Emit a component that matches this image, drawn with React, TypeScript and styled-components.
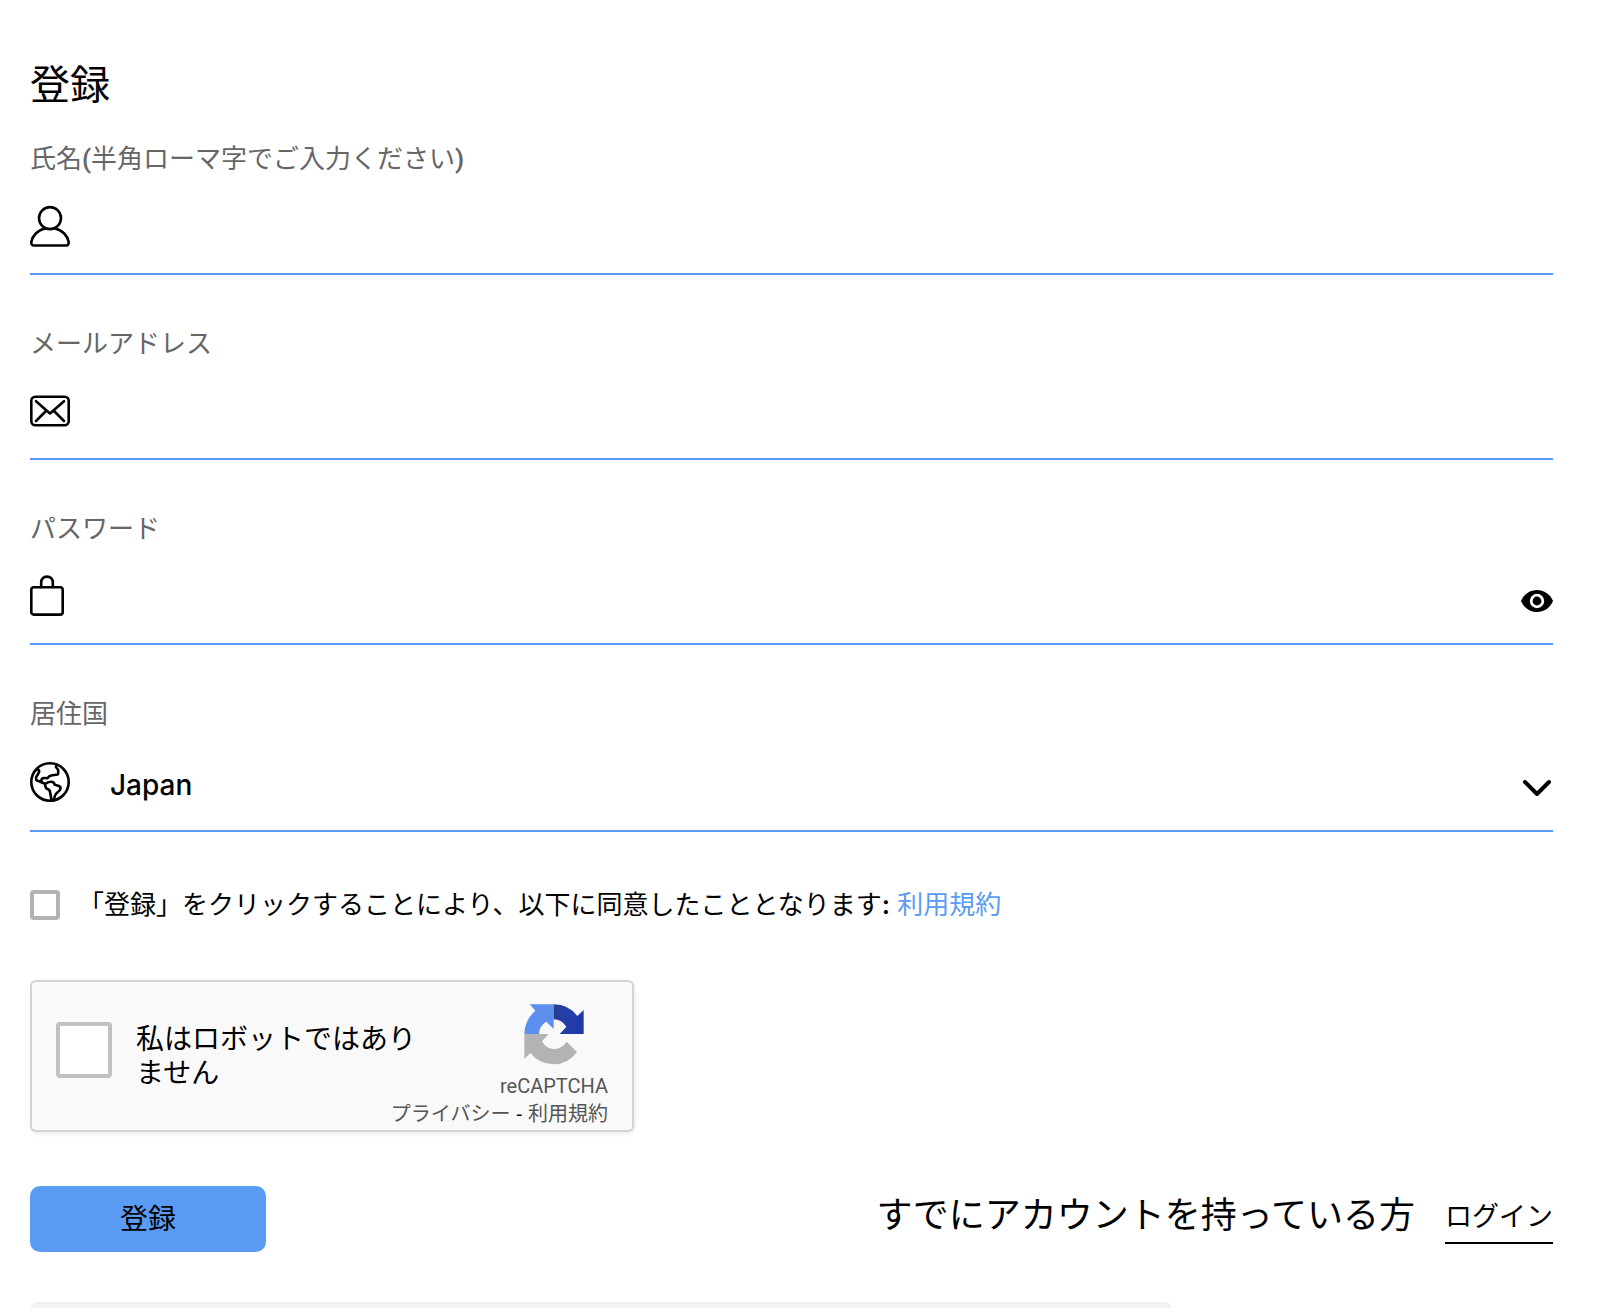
import React, { useState } from "react";
import styled, { createGlobalStyle } from "styled-components";

const blue = "#5a9bf3";
const jp = `"Noto Sans CJK JP", sans-serif`;

const GlobalStyle = createGlobalStyle`
  *, *::before, *::after { box-sizing: border-box; }
  body {
    margin: 0;
    background: #fff;
    color: #000;
    font-family: Inter, ${jp};
    font-size: 26px;
    overflow: hidden;
  }
  h1, p { margin: 0; }
  button, input, select { font: inherit; color: inherit; }
  a { text-decoration: none; }
`;

const Page = styled.main`
  padding: 60px 53px 0 30px;
`;

const Title = styled.h1`
  font-size: 40px;
  font-weight: 400;
  line-height: 50px;
`;

const Form = styled.form`
  display: flex;
  flex-direction: column;
  padding-top: 30px;
`;

const Fields = styled.div`
  display: flex;
  flex-direction: column;
  gap: 50px;
`;

const Field = styled.div`
  display: flex;
  flex-direction: column;
`;

const Label = styled.label`
  color: #666;
  font-family: Roboto, ${jp};
  line-height: 38px;
`;

const Strong = styled.span`
  font-weight: 600;
`;

const Control = styled.div<{ $height?: number }>`
  display: flex;
  align-items: center;
  height: ${(p) => p.$height ?? 97}px;
  border-bottom: 2px solid ${blue};
`;

const IconBox = styled.svg`
  flex: none;
  width: 40px;
  height: 42px;
  fill: none;
  stroke: #000;
  stroke-width: 2.6;
  stroke-linecap: round;
  stroke-linejoin: round;
`;

const TextInput = styled.input`
  flex: 1;
  min-width: 0;
  height: 60px;
  padding: 0 0 0 40px;
  border: 0;
  outline: 0;
  background: transparent;
  font-size: 28px;
`;

const EyeButton = styled.button`
  display: flex;
  padding: 10px 0 0;
  border: 0;
  background: none;
  cursor: pointer;
`;

const SelectWrap = styled.div`
  flex: 1;
  display: flex;
  align-items: center;
`;

const Select = styled.select`
  appearance: none;
  flex: 1;
  height: 60px;
  padding: 6px 0 0 40px;
  border: 0;
  outline: 0;
  background: transparent;
  font-size: 28px;
  font-weight: 500;
`;

const Chevron = styled.svg`
  flex: none;
  width: 32px;
  height: 20px;
  margin-top: 12px;
  margin-left: -32px;
  fill: none;
  stroke: #000;
  stroke-width: 4;
  stroke-linecap: round;
  stroke-linejoin: round;
  pointer-events: none;
`;

const Tick = styled.input<{ $size: number; $line: string }>`
  appearance: none;
  flex: none;
  width: ${(p) => p.$size}px;
  height: ${(p) => p.$size}px;
  margin: 0;
  border: 4px solid ${(p) => p.$line};
  border-radius: 4px;
  background: #fff;
  &:checked { background: ${blue}; }
`;

const Agreement = styled.div`
  display: flex;
  align-items: center;
  gap: 18px;
  margin-top: 54px;
  line-height: 38px;
`;

const AgreementText = styled.p`
  font-weight: 400;
`;

const TermsLink = styled.a`
  color: ${blue};
`;

const Captcha = styled.div`
  display: flex;
  flex-direction: column;
  width: 604px;
  max-width: 100%;
  height: 152px;
  margin-top: 56px;
  padding: 22px 24px 0;
  border: 2px solid #d3d3d3;
  border-radius: 6px;
  background: #f9f9f9;
  box-shadow: 1px 2px 4px rgba(0, 0, 0, 0.08);
`;

const CaptchaTop = styled.div`
  display: flex;
  align-items: flex-start;
  gap: 24px;
`;

const CaptchaCheck = styled.div`
  flex: 1;
  display: flex;
  align-items: flex-start;
  gap: 24px;
  padding-top: 18px;
`;

const CaptchaLabel = styled.label`
  width: 284px;
  font-size: 28px;
  line-height: 34px;
`;

const BrandMark = styled.div`
  display: flex;
  flex-direction: column;
  align-items: center;
  gap: 7px;
  color: #555;
  font-family: Roboto, ${jp};
  font-size: 20px;
  line-height: 28px;
`;

const CaptchaLinks = styled.div`
  display: flex;
  justify-content: flex-end;
  gap: 6px;
  font-family: Roboto, ${jp};
  font-size: 20px;
  line-height: 28px;
  a { color: #555; }
`;

const Actions = styled.div`
  display: flex;
  align-items: flex-start;
  justify-content: space-between;
  margin-top: 54px;
`;

const Submit = styled.button`
  width: 236px;
  height: 66px;
  padding: 0 0 4px;
  border: 0;
  border-radius: 10px;
  background: ${blue};
  font-size: 28px;
`;

const LoginRow = styled.div`
  display: flex;
  align-items: center;
  gap: 30px;
`;

const LoginText = styled.p`
  font-size: 36px;
  line-height: 56px;
`;

const LoginLink = styled.a`
  padding-top: 6px;
  border-bottom: 2px solid #000;
  color: #000;
  font-size: 27px;
  line-height: 50px;
`;

const NextPanel = styled.section`
  width: 75%;
  height: 60px;
  margin-top: 50px;
  border: 2px solid #eef1f1;
  border-radius: 8px;
  background: #f3f4f4;
`;

const UserIcon = () => (
  <IconBox viewBox="0 0 40 42" aria-hidden="true">
    <circle cx="20" cy="13.1" r="11" />
    <path d="M15 23.4C7.5 25 2.5 31 1.4 36.5C1 39 2 40.5 4.2 40.5H35.8C38 40.5 39 39 38.6 36.5C37.5 31 32.5 25 25 23.4" />
  </IconBox>
);

const MailIcon = () => (
  <IconBox viewBox="0 0 40 42" aria-hidden="true">
    <rect x="1.3" y="6.8" width="37.4" height="28.4" rx="4" />
    <path d="M6 11.2L20 23.4L34 11.2M6 31L16 21M34 31L24 21" />
  </IconBox>
);

const LockIcon = () => (
  <IconBox viewBox="0 0 40 42" aria-hidden="true">
    <rect x="1.3" y="12.2" width="31.4" height="27.4" rx="2.6" />
    <path d="M11.2 12V7.5C11.2 4 13.4 1.6 17 1.6S22.8 4 22.8 7.5V12" />
  </IconBox>
);

const GlobeIcon = () => (
  <IconBox viewBox="0 -1 40 42" aria-hidden="true">
    <circle cx="20" cy="20" r="18.7" />
    <path d="M6.5 8C9 7 10 9 8.6 11L6.2 15.2C5.5 18 6.5 18.8 8.5 19L11.5 20.2C11 17.5 12 15.8 14 16L17.5 16.3C18.5 14 20 13.5 22.5 13.2L27.8 12.5C28.7 11.5 28 9.5 28.2 8L26 5L26.5 2.5" />
    <path d="M11.5 20.2L15.2 22C15 25 15.6 26.5 18 27.2C20 28 20.3 29.5 20.4 32L21.6 38.5M15.2 22C16.5 21 18 20 20.5 19.8C23 19.5 24.2 20.5 24.8 22.8L29 24C31 25 31 26.5 29.5 28.5C27.8 30.5 25.5 31.5 24.8 34L23.7 38.5" />
  </IconBox>
);

const EyeIcon = () => (
  <svg width="32" height="22" viewBox="0 0 32 22" aria-hidden="true">
    <path d="M0 11C3 4 9 0 16 0S29 4 32 11C29 18 23 22 16 22S3 18 0 11Z" />
    <circle cx="16" cy="11" r="5.8" stroke="#fff" strokeWidth="2.8" />
  </svg>
);

const CaptchaLogo = () => (
  <svg width="60" height="61" viewBox="0 0 180 183" aria-hidden="true">
    <defs>
      <linearGradient id="navy" x1="0" x2="1">
        <stop offset="0" stopColor="#2c3c8f" />
        <stop offset=".3" stopColor="#2440a8" />
        <stop offset="1" stopColor="#2038a8" />
      </linearGradient>
    </defs>
    <path fill="#5d90ee" d="M17 1H89V75L67 53Q46 65 45 90H1Q2 48 34 20Z" />
    <path fill="url(#navy)" d="M89 1Q135 2 160 36L179 18V90H107L127 68Q112 46 89 46Z" />
    <path fill="#b3b3b3" d="M1 90H74L54 112Q67 135 89 135Q113 135 128 113L159 144Q132 181 89 181Q45 180 19 147L1 165Z" />
  </svg>
);

export default function App() {
  const [visible, setVisible] = useState(false);

  return (
    <>
      <GlobalStyle />
      <Page>
        <Title>登録</Title>
        <Form onSubmit={(e) => e.preventDefault()}>
          <Fields>
            <Field>
              <Label htmlFor="name">
                氏名<Strong>(</Strong>半角ローマ字でご入力ください<Strong>)</Strong>
              </Label>
              <Control>
                <UserIcon />
                <TextInput id="name" type="text" />
              </Control>
            </Field>
            <Field>
              <Label htmlFor="email">メールアドレス</Label>
              <Control>
                <MailIcon />
                <TextInput id="email" type="email" />
              </Control>
            </Field>
            <Field>
              <Label htmlFor="password">パスワード</Label>
              <Control>
                <LockIcon />
                <TextInput id="password" type={visible ? "text" : "password"} />
                <EyeButton
                  type="button"
                  aria-label="パスワードを表示"
                  onClick={() => setVisible(!visible)}
                >
                  <EyeIcon />
                </EyeButton>
              </Control>
            </Field>
            <Field>
              <Label htmlFor="country">居住国</Label>
              <Control $height={99}>
                <GlobeIcon />
                <SelectWrap>
                  <Select id="country" defaultValue="Japan">
                    <option>Japan</option>
                  </Select>
                  <Chevron viewBox="0 0 32 20" aria-hidden="true">
                    <path d="M4 4L16 16L28 4" />
                  </Chevron>
                </SelectWrap>
              </Control>
            </Field>
          </Fields>

          <Agreement>
            <Tick id="agree" type="checkbox" $size={30} $line="#b3b3b3" />
            <AgreementText>
              <label htmlFor="agree">
                「登録」をクリックすることにより、以下に同意したこととなります<Strong>:</Strong>
              </label>{" "}
              <TermsLink href="#terms">利用規約</TermsLink>
            </AgreementText>
          </Agreement>

          <Captcha>
            <CaptchaTop>
              <CaptchaCheck>
                <Tick id="robot" type="checkbox" $size={56} $line="#c1c1c1" />
                <CaptchaLabel htmlFor="robot">私はロボットではありません</CaptchaLabel>
              </CaptchaCheck>
              <BrandMark>
                <CaptchaLogo />
                <span>reCAPTCHA</span>
              </BrandMark>
            </CaptchaTop>
            <CaptchaLinks>
              <a href="#privacy">プライバシー</a>
              <span>-</span>
              <a href="#captcha-terms">利用規約</a>
            </CaptchaLinks>
          </Captcha>

          <Actions>
            <Submit type="submit">登録</Submit>
            <LoginRow>
              <LoginText>すでにアカウントを持っている方</LoginText>
              <LoginLink href="#login">ログイン</LoginLink>
            </LoginRow>
          </Actions>
        </Form>
        <NextPanel />
      </Page>
    </>
  );
}
